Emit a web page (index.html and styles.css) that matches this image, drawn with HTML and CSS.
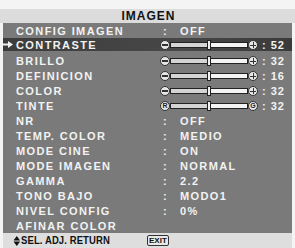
FILE: index.html
```html
<!DOCTYPE html>
<html>
<head>
<meta charset="utf-8">
<link rel="stylesheet" href="styles.css">
</head>
<body>
<div class="screen">
  <div class="title">IMAGEN</div>
  <div class="panel">
    <div class="row"><span class="label">CONFIG IMAGEN</span><span class="colon">:</span><span class="value">OFF</span></div>
    <div class="row active"><svg class="pointer" width="10" height="7" viewBox="0 0 10 7"><path d="M0 2.5 H5 V0 L10 3.5 L5 7 V4.5 H0 Z" fill="#f2f2f2"/></svg><span class="label">CONTRASTE</span>
      <div class="slider"><span class="knob-end minus"></span><span class="bar"><span class="thumb"></span></span><span class="knob-end plus"></span><span class="scolon">:</span><span class="num">52</span></div></div>
    <div class="row"><span class="label">BRILLO</span>
      <div class="slider"><span class="knob-end minus"></span><span class="bar"><span class="thumb"></span></span><span class="knob-end plus"></span><span class="scolon">:</span><span class="num">32</span></div></div>
    <div class="row"><span class="label">DEFINICION</span>
      <div class="slider"><span class="knob-end minus"></span><span class="bar"><span class="thumb"></span></span><span class="knob-end plus"></span><span class="scolon">:</span><span class="num">16</span></div></div>
    <div class="row"><span class="label">COLOR</span>
      <div class="slider"><span class="knob-end minus"></span><span class="bar"><span class="thumb"></span></span><span class="knob-end plus"></span><span class="scolon">:</span><span class="num">32</span></div></div>
    <div class="row"><span class="label">TINTE</span>
      <div class="slider"><span class="knob-end letter">R</span><span class="bar"><span class="thumb"></span></span><span class="knob-end letter">G</span><span class="scolon">:</span><span class="num">32</span></div></div>
    <div class="row"><span class="label">NR</span><span class="colon">:</span><span class="value">OFF</span></div>
    <div class="row"><span class="label">TEMP. COLOR</span><span class="colon">:</span><span class="value">MEDIO</span></div>
    <div class="row"><span class="label">MODE CINE</span><span class="colon">:</span><span class="value">ON</span></div>
    <div class="row"><span class="label">MODE IMAGEN</span><span class="colon">:</span><span class="value">NORMAL</span></div>
    <div class="row"><span class="label">GAMMA</span><span class="colon">:</span><span class="value">2.2</span></div>
    <div class="row"><span class="label">TONO BAJO</span><span class="colon">:</span><span class="value">MODO1</span></div>
    <div class="row"><span class="label">NIVEL CONFIG</span><span class="colon">:</span><span class="value">0%</span></div>
    <div class="row"><span class="label">AFINAR COLOR</span></div>
  </div>
  <div class="footer">
    <span class="nav"><svg class="updown" width="7" height="10" viewBox="0 0 7 10"><path d="M3.5 0 L7 4.5 L0 4.5 Z M0 5.5 L7 5.5 L3.5 10 Z" fill="#111"/></svg>SEL. ADJ. RETURN</span>
    <span class="exit">EXIT</span>
  </div>
</div>
</body>
</html>
```

FILE: styles.css
```css
html, body {
  margin: 0;
  padding: 0;
  background: #f4f4f4;
}
.screen {
  width: 295px;
  height: 248px;
  display: flex;
  flex-direction: column;
  font-family: "Liberation Sans", Arial, sans-serif;
  font-weight: bold;
}
.title {
  margin-top: 9px;
  height: 14px;
  background: #dcdcdc;
  color: #111;
  font-size: 12px;
  line-height: 14px;
  letter-spacing: 1px;
  text-align: center;
  padding-left: 2px;
}
.panel {
  margin: 0 3px;
  background: #7a7a7a;
  display: flex;
  flex-direction: column;
}
.row {
  position: relative;
  height: 15px;
  display: grid;
  grid-template-columns: 157px 20px 1fr;
  align-items: center;
  color: #f2f2f2;
  font-size: 11px;
  letter-spacing: 1.4px;
}
.row.active {
  background: linear-gradient(90deg, #3c3c3c, #474747 60%, #3a3a3a);
  height: 13px;
  margin-bottom: 2px;
}
.label {
  padding-left: 13px;
  white-space: nowrap;
}
.pointer {
  position: absolute;
  left: 0;
  top: 3px;
}
.colon {
  padding-left: 3px;
}
.slider {
  grid-column: 2 / 4;
  display: flex;
  align-items: center;
  letter-spacing: 0;
}
.knob-end {
  width: 8px;
  height: 8px;
  border-radius: 5px;
  background: #e6e6e6;
  border: 1px solid #333;
  position: relative;
  box-sizing: content-box;
  display: flex;
  align-items: center;
  justify-content: center;
  font-size: 7px;
  color: #222;
  line-height: 8px;
}
.minus::after {
  content: "";
  width: 6px;
  height: 2px;
  background: #333;
}
.plus::before, .plus::after {
  content: "";
  position: absolute;
  background: #333;
}
.plus::after {
  width: 6px;
  height: 1px;
  left: 1px;
  top: 4px;
}
.plus::before {
  width: 1px;
  height: 6px;
  left: 4px;
  top: 1px;
}
.bar {
  width: 76px;
  height: 4px;
  background: linear-gradient(90deg, #d4d4d4 0 50%, #f4f4f4 50% 100%);
  border: 1px solid #222;
  position: relative;
}
.thumb {
  position: absolute;
  left: 36px;
  top: -3px;
  width: 2px;
  height: 8px;
  background: #eee;
  border: 1px solid #222;
}
.scolon {
  margin-left: 4px;
}
.num {
  margin-left: 5px;
  letter-spacing: 1px;
}
.footer {
  margin: 0 3px;
  flex: 1;
  background: #dedede;
  display: flex;
  align-items: center;
  font-size: 10px;
  color: #111;
  font-family: "Liberation Sans Narrow", "Liberation Sans", Arial, sans-serif;
}
.nav {
  display: flex;
  align-items: center;
  padding-left: 11px;
  width: 133px;
  letter-spacing: 0.1px;
  transform: scaleX(0.95);
  transform-origin: left center;
}
.updown {
  margin-right: 1px;
}
.exit {
  border: 1px solid #333;
  border-radius: 2px;
  padding: 0 1px;
  font-size: 8px;
  line-height: 9px;
  background: #e8e8e8;
}
```
